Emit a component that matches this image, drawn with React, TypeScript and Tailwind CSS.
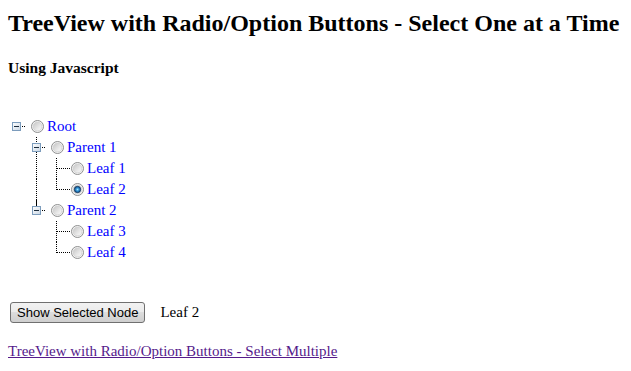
import React, { useId } from "react";

type Cell = "empty" | "I" | "T" | "L" | "box" | "boxUpDown" | "boxUpSolid";

function TreeCell({ kind }: { kind: Cell }) {
  const dots = { stroke: "#000", strokeWidth: 1, strokeDasharray: "1 1" };
  const isBox = kind.startsWith("box");
  return (
    <div className="w-[20px] h-[21px] shrink-0">
      <svg width="20" height="21" viewBox="0 0 20 21">
        {(kind === "I" || kind === "T") && <line x1="5.5" y1="0" x2="5.5" y2="21" {...dots} />}
        {kind === "L" && <line x1="5.5" y1="0" x2="5.5" y2="11" {...dots} />}
        {(kind === "T" || kind === "L") && <line x1="6" y1="10.5" x2="20" y2="10.5" {...dots} />}
        {kind === "boxUpDown" && (
          <>
            <line x1="5.5" y1="0" x2="5.5" y2="6" {...dots} />
            <line x1="5.5" y1="15" x2="5.5" y2="21" {...dots} />
          </>
        )}
        {kind === "boxUpSolid" && <line x1="5.5" y1="0" x2="5.5" y2="6" stroke="#000" strokeWidth="1" />}
        {isBox && (
          <>
            <defs>
              <linearGradient id="boxg" x1="0" y1="0" x2="1" y2="1">
                <stop offset="0" stopColor="#ffffff" />
                <stop offset="1" stopColor="#c9d6e3" />
              </linearGradient>
            </defs>
            <rect x="1.5" y="6.5" width="8" height="8" fill="url(#boxg)" stroke="#7c9cbc" />
            <line x1="3" y1="10.5" x2="8" y2="10.5" stroke="#1b2b3b" strokeWidth="1" />
            <line x1="11" y1="10.5" x2="15" y2="10.5" {...dots} />
          </>
        )}
      </svg>
    </div>
  );
}

function Radio({ checked }: { checked?: boolean }) {
  const id = useId().replace(/:/g, "");
  return (
    <svg width="13" height="13" viewBox="0 0 13 13" className="shrink-0">
      <defs>
        <linearGradient id={id + "i"} x1="0" y1="0" x2="1" y2="1">
          <stop offset="0" stopColor="#c4c4c4" />
          <stop offset="0.6" stopColor="#e8e8e8" />
          <stop offset="1" stopColor="#fbfbfb" />
        </linearGradient>
        <radialGradient id={id + "d"} cx="0.5" cy="0.5" r="0.55">
          <stop offset="0" stopColor="#9ee6ff" />
          <stop offset="0.45" stopColor="#2c8ed0" />
          <stop offset="1" stopColor="#0b3a70" />
        </radialGradient>
      </defs>
      <circle cx="6.5" cy="6.5" r="6" fill="#f4f4f4" stroke="#8e8f8f" />
      <circle cx="6.5" cy="6.5" r="4.4" fill={`url(#${id}i)`} stroke="#cfcfcf" strokeWidth="0.8" />
      {checked && <circle cx="6.5" cy="6.5" r="3.2" fill={`url(#${id}d)`} stroke="#16385c" strokeWidth="0.8" />}
    </svg>
  );
}

const rows: { cells: Cell[]; label: string; checked?: boolean }[] = [
  { cells: ["box"], label: "Root" },
  { cells: ["empty", "boxUpDown"], label: "Parent 1" },
  { cells: ["empty", "I", "T"], label: "Leaf 1" },
  { cells: ["empty", "I", "L"], label: "Leaf 2", checked: true },
  { cells: ["empty", "boxUpSolid"], label: "Parent 2" },
  { cells: ["empty", "empty", "T"], label: "Leaf 3" },
  { cells: ["empty", "empty", "L"], label: "Leaf 4" },
];

export default function App() {
  return (
    <div className="w-[631px] h-[371px] bg-white px-[8px] text-black font-['Liberation_Serif',serif] overflow-hidden">
      <h2 className="pt-[9px] text-[24px] leading-[28px] font-bold whitespace-nowrap">
        TreeView with Radio/Option Buttons - Select One at a Time
      </h2>
      <h4 className="mt-[21px] text-[15.5px] leading-[19px] font-bold">Using Javascript</h4>

      <div className="mt-[39px] ml-[3px] flex flex-col">
        {rows.map((r) => (
          <div key={r.label} className="flex items-center h-[21px]">
            {r.cells.map((c, i) => (
              <TreeCell key={i} kind={c} />
            ))}
            <Radio checked={r.checked} />
            <span className="ml-[3px] text-[15px] leading-[19px] text-[#0000ff]">{r.label}</span>
          </div>
        ))}
      </div>

      <div className="mt-[39px] flex items-center h-[21px]">
        <button className="ml-[2px] h-[21px] px-[6px] border border-[#707070] rounded-[3px] bg-[linear-gradient(to_bottom,#f2f2f2_0%,#ebebeb_50%,#dddddd_50%,#cfcfcf_100%)] font-['Liberation_Sans',Arial,sans-serif] text-[13px] leading-[19px] text-black">
          Show Selected Node
        </button>
        <span className="ml-[15px] text-[15px] leading-[19px]">Leaf 2</span>
      </div>

      <div className="mt-[16px]">
        <a href="#" className="text-[15px] leading-[19px] text-[#551a8b] underline">
          TreeView with Radio/Option Buttons - Select Multiple
        </a>
      </div>
    </div>
  );
}
